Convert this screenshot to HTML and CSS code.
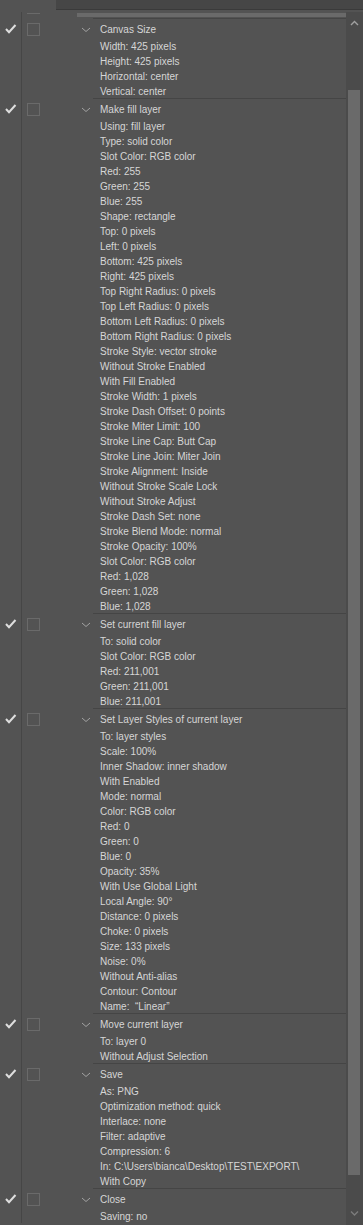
FILE: index.html
```html
<!DOCTYPE html>
<html lang="en">
<head>
  <meta charset="UTF-8">
  <meta name="viewport" content="width=device-width, initial-scale=1.0">
  <title>Actions</title>
  <link rel="stylesheet" href="styles.css">
</head>
<body>
  <div class="tabbar"><div class="tab-fill"></div></div>
  <div class="panel">
    <div class="list">
      <div class="prev">
        <div class="col-check"></div>
        <div class="col-dialog"><div class="prev-box"></div></div>
        <div class="prev-bar"></div>
      </div>

      <div class="step">
        <div class="col-check"><svg class="tick" width="12" height="10" viewBox="0 0 12 10"><path d="M1 5 L4 8.2 L10.5 1" /></svg></div>
        <div class="col-dialog"><div class="box"></div></div>
        <div class="col-chev"><svg class="chev" width="10" height="6" viewBox="0 0 10 6"><path d="M1 1 L5 4.5 L9 1" /></svg></div>
        <div class="body">
          <div class="title">Canvas Size</div>
          <div class="param">Width: 425 pixels</div>
          <div class="param">Height: 425 pixels</div>
          <div class="param">Horizontal: center</div>
          <div class="param">Vertical: center</div>
        </div>
      </div>

      <div class="step">
        <div class="col-check"><svg class="tick" width="12" height="10" viewBox="0 0 12 10"><path d="M1 5 L4 8.2 L10.5 1" /></svg></div>
        <div class="col-dialog"><div class="box"></div></div>
        <div class="col-chev"><svg class="chev" width="10" height="6" viewBox="0 0 10 6"><path d="M1 1 L5 4.5 L9 1" /></svg></div>
        <div class="body">
          <div class="title">Make fill layer</div>
          <div class="param">Using: fill layer</div>
          <div class="param">Type: solid color</div>
          <div class="param">Slot Color: RGB color</div>
          <div class="param">Red: 255</div>
          <div class="param">Green: 255</div>
          <div class="param">Blue: 255</div>
          <div class="param">Shape: rectangle</div>
          <div class="param">Top: 0 pixels</div>
          <div class="param">Left: 0 pixels</div>
          <div class="param">Bottom: 425 pixels</div>
          <div class="param">Right: 425 pixels</div>
          <div class="param">Top Right Radius: 0 pixels</div>
          <div class="param">Top Left Radius: 0 pixels</div>
          <div class="param">Bottom Left Radius: 0 pixels</div>
          <div class="param">Bottom Right Radius: 0 pixels</div>
          <div class="param">Stroke Style: vector stroke</div>
          <div class="param">Without Stroke Enabled</div>
          <div class="param">With Fill Enabled</div>
          <div class="param">Stroke Width: 1 pixels</div>
          <div class="param">Stroke Dash Offset: 0 points</div>
          <div class="param">Stroke Miter Limit: 100</div>
          <div class="param">Stroke Line Cap: Butt Cap</div>
          <div class="param">Stroke Line Join: Miter Join</div>
          <div class="param">Stroke Alignment: Inside</div>
          <div class="param">Without Stroke Scale Lock</div>
          <div class="param">Without Stroke Adjust</div>
          <div class="param">Stroke Dash Set: none</div>
          <div class="param">Stroke Blend Mode: normal</div>
          <div class="param">Stroke Opacity: 100%</div>
          <div class="param">Slot Color: RGB color</div>
          <div class="param">Red: 1,028</div>
          <div class="param">Green: 1,028</div>
          <div class="param">Blue: 1,028</div>
        </div>
      </div>

      <div class="step">
        <div class="col-check"><svg class="tick" width="12" height="10" viewBox="0 0 12 10"><path d="M1 5 L4 8.2 L10.5 1" /></svg></div>
        <div class="col-dialog"><div class="box"></div></div>
        <div class="col-chev"><svg class="chev" width="10" height="6" viewBox="0 0 10 6"><path d="M1 1 L5 4.5 L9 1" /></svg></div>
        <div class="body">
          <div class="title">Set current fill layer</div>
          <div class="param">To: solid color</div>
          <div class="param">Slot Color: RGB color</div>
          <div class="param">Red: 211,001</div>
          <div class="param">Green: 211,001</div>
          <div class="param">Blue: 211,001</div>
        </div>
      </div>

      <div class="step">
        <div class="col-check"><svg class="tick" width="12" height="10" viewBox="0 0 12 10"><path d="M1 5 L4 8.2 L10.5 1" /></svg></div>
        <div class="col-dialog"><div class="box"></div></div>
        <div class="col-chev"><svg class="chev" width="10" height="6" viewBox="0 0 10 6"><path d="M1 1 L5 4.5 L9 1" /></svg></div>
        <div class="body">
          <div class="title">Set Layer Styles of current layer</div>
          <div class="param">To: layer styles</div>
          <div class="param">Scale: 100%</div>
          <div class="param">Inner Shadow: inner shadow</div>
          <div class="param">With Enabled</div>
          <div class="param">Mode: normal</div>
          <div class="param">Color: RGB color</div>
          <div class="param">Red: 0</div>
          <div class="param">Green: 0</div>
          <div class="param">Blue: 0</div>
          <div class="param">Opacity: 35%</div>
          <div class="param">With Use Global Light</div>
          <div class="param">Local Angle: 90°</div>
          <div class="param">Distance: 0 pixels</div>
          <div class="param">Choke: 0 pixels</div>
          <div class="param">Size: 133 pixels</div>
          <div class="param">Noise: 0%</div>
          <div class="param">Without Anti-alias</div>
          <div class="param">Contour: Contour</div>
          <div class="param">Name: &nbsp;“Linear”</div>
        </div>
      </div>

      <div class="step">
        <div class="col-check"><svg class="tick" width="12" height="10" viewBox="0 0 12 10"><path d="M1 5 L4 8.2 L10.5 1" /></svg></div>
        <div class="col-dialog"><div class="box"></div></div>
        <div class="col-chev"><svg class="chev" width="10" height="6" viewBox="0 0 10 6"><path d="M1 1 L5 4.5 L9 1" /></svg></div>
        <div class="body">
          <div class="title">Move current layer</div>
          <div class="param">To: layer 0</div>
          <div class="param">Without Adjust Selection</div>
        </div>
      </div>

      <div class="step">
        <div class="col-check"><svg class="tick" width="12" height="10" viewBox="0 0 12 10"><path d="M1 5 L4 8.2 L10.5 1" /></svg></div>
        <div class="col-dialog"><div class="box"></div></div>
        <div class="col-chev"><svg class="chev" width="10" height="6" viewBox="0 0 10 6"><path d="M1 1 L5 4.5 L9 1" /></svg></div>
        <div class="body">
          <div class="title">Save</div>
          <div class="param">As: PNG</div>
          <div class="param">Optimization method: quick</div>
          <div class="param">Interlace: none</div>
          <div class="param">Filter: adaptive</div>
          <div class="param">Compression: 6</div>
          <div class="param">In: C:\Users\bianca\Desktop\TEST\EXPORT\</div>
          <div class="param">With Copy</div>
        </div>
      </div>

      <div class="step">
        <div class="col-check"><svg class="tick" width="12" height="10" viewBox="0 0 12 10"><path d="M1 5 L4 8.2 L10.5 1" /></svg></div>
        <div class="col-dialog"><div class="box"></div></div>
        <div class="col-chev"><svg class="chev" width="10" height="6" viewBox="0 0 10 6"><path d="M1 1 L5 4.5 L9 1" /></svg></div>
        <div class="body">
          <div class="title">Close</div>
          <div class="param">Saving: no</div>
        </div>
      </div>
    </div>

    <div class="scrollbar">
      <div class="arrow"><svg width="9" height="6" viewBox="0 0 9 6"><path d="M1 5 L4.5 1.5 L8 5" /></svg></div>
      <div class="track"><div class="thumb"></div></div>
      <div class="arrow down"><svg width="9" height="6" viewBox="0 0 9 6"><path d="M1 1.5 L4.5 5 L8 1.5" /></svg></div>
    </div>
  </div>
</body>
</html>
```

FILE: styles.css
```css
body {
  margin: 0;
  background-color: #535353;
  font-family: "Liberation Sans", Arial, sans-serif;
  font-size: 10px;
  color: #d6d6d6;
  width: 363px;
  height: 1225px;
  overflow: hidden;
}
.tabbar {
  height: 12px;
  display: flex;
}
.tab-fill {
  margin-left: 56px;
  flex: 1;
  height: 9px;
  background-color: #464646;
  border-bottom: 1px solid #3a3a3a;
}
.panel {
  display: flex;
  height: 1213px;
}
.list {
  flex: 1;
  display: flex;
  flex-direction: column;
}
.prev {
  display: flex;
  height: 6px;
}
.prev-box {
  margin: 1px 0 0 5px;
  width: 13px;
  border-top: 1px solid #6a6a6a;
}
.prev-bar {
  margin: 1px 0 0 0;
  flex: 1;
  height: 4px;
  background-color: #6a6a6a;
}
.step {
  display: flex;
}
.col-check {
  width: 21px;
  border-right: 1px solid #464646;
  display: flex;
  justify-content: center;
  align-items: flex-start;
}
.col-dialog {
  width: 55px;
}
.col-chev {
  width: 16px;
  display: flex;
  justify-content: center;
}
.tick {
  margin-top: 6px;
  fill: none;
  stroke: #dedede;
  stroke-width: 2;
}
.box {
  margin: 5px 0 0 5px;
  width: 11px;
  height: 11px;
  border: 1px solid #6a6a6a;
}
.chev {
  margin-top: 9px;
  margin-left: 1px;
  fill: none;
  stroke: #a2a2a2;
  stroke-width: 1;
}
.body {
  flex: 1;
  border-top: 1px solid #454545;
  padding-left: 7px;
}
.title {
  height: 19px;
  line-height: 21px;
}
.param {
  height: 15px;
  line-height: 17px;
  white-space: nowrap;
}
.scrollbar {
  width: 17px;
  background-color: #4b4b4b;
  display: flex;
  flex-direction: column;
}
.arrow {
  height: 22px;
  display: flex;
  justify-content: center;
  align-items: center;
}
.arrow svg {
  fill: none;
  stroke: #a0a0a0;
  stroke-width: 1.4;
}
.arrow.down svg {
  stroke: #7c7c7c;
}
.track {
  flex: 1;
  padding-left: 2px;
}
.thumb {
  margin-top: 56px;
  width: 12px;
  height: 1085px;
  background-color: #6a6a6a;
}
.arrow.down {
  height: 24px;
}
```
